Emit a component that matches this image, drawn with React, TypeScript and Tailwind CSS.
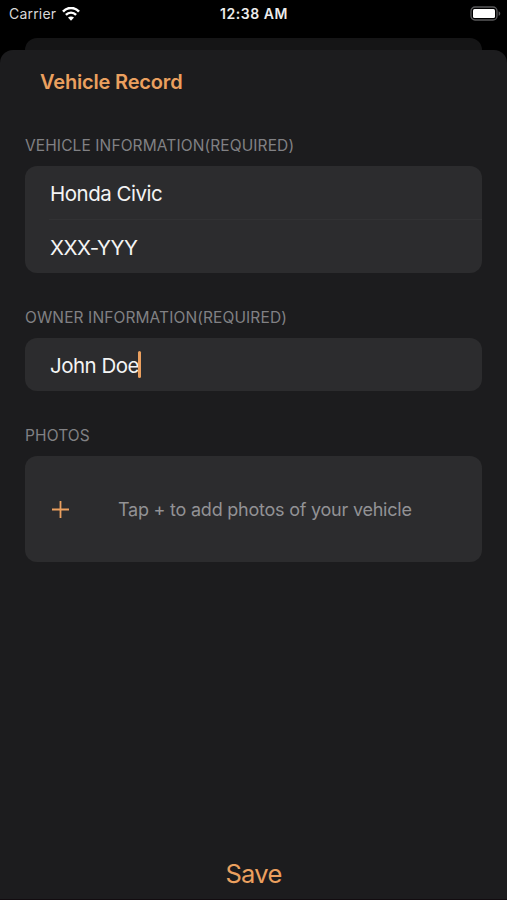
import type { ReactNode } from "react";

const Wifi = () => (
  <svg width="18" height="14" viewBox="0 0 18 14" fill="none" stroke="#fff">
    <path d="M1 4.7C5.4 -0.3 12.6 -0.3 17 4.7" strokeWidth="2.5" />
    <path d="M3.9 7.9C6.8 4.8 11.2 4.8 14.1 7.9" strokeWidth="2.4" />
    <path d="M9 13.7L6 10.6C7.7 9 10.3 9 12 10.6Z" fill="#fff" stroke="none" />
  </svg>
);

const Battery = () => (
  <svg width="31" height="15" viewBox="0 0 31 15" fill="none">
    <rect x="1" y="1" width="26" height="13" rx="4" stroke="#59595b" strokeWidth="1.3" />
    <rect x="3" y="3" width="22" height="9" rx="1.5" fill="#fff" />
    <path d="M28.6 5.2C30.8 6 30.8 9 28.6 9.8Z" fill="#59595b" />
  </svg>
);

const StatusBar = () => (
  <header className="relative h-[50px] shrink-0 bg-black pl-[9px] pr-[6px]">
    <div className="grid h-[27px] grid-cols-3 items-center">
      <div className="flex items-center gap-[6px]">
        <span className="text-[14px] tracking-[0.2px] text-[#d8d8d8]">Carrier</span>
        <Wifi />
      </div>
      <span className="-ml-[2px] whitespace-nowrap text-center text-[14px] font-semibold tracking-[0.55px] text-[#ececec]">
        12:38 AM
      </span>
      <div className="flex justify-end">
        <Battery />
      </div>
    </div>
    <div className="absolute inset-x-[25px] bottom-0 h-[12px] rounded-t-[12px] bg-[#151516]"></div>
  </header>
);

const Section = ({ title, children }: { title: string; children: ReactNode }) => (
  <section className="mb-[34px]">
    <h2 className="mb-[11px] h-[20px] text-[15.5px] leading-[22px] tracking-[0.11px] text-[#818184]">
      {title}
    </h2>
    <div className="overflow-hidden rounded-[12px] bg-[#2c2c2e]">{children}</div>
  </section>
);

const ROW =
  "flex h-[53px] items-center pl-[25px] pt-[3px] text-[20.5px] tracking-[-0.5px] text-[#f4f4f4]";

const App = () => {
  return (
    <div className="bg-black font-['Inter',sans-serif]">
      <div className="flex h-[900px] w-[507px] flex-col">
        <StatusBar />
        <main className="flex flex-1 flex-col rounded-t-[13px] border-b border-[#120c10] bg-[#1c1c1e] px-[25px]">
          <h1 className="mb-[38px] ml-[15px] mt-[18px] h-[29px] text-[20px] font-semibold leading-[29px] tracking-[-0.17px] text-[#eba05f]">
            Vehicle Record
          </h1>
          <Section title="VEHICLE INFORMATION(REQUIRED)">
            <div className={ROW}>Honda Civic</div>
            <div className="ml-[24px] h-px bg-[#323234]"></div>
            <div className={ROW}>XXX-YYY</div>
          </Section>
          <Section title="OWNER INFORMATION(REQUIRED)">
            <div className={ROW}>
              John Doe
              <span className="-ml-px -mt-[3px] h-[27px] w-[3px] rounded-full bg-[#eba05f]"></span>
            </div>
          </Section>
          <Section title="PHOTOS">
            <div className="flex h-[106px] items-center pl-[27px]">
              <button aria-label="Add photo">
                <svg width="17" height="17" viewBox="0 0 17 17" stroke="#eba05f" strokeWidth="1.8">
                  <path d="M8.5 0V17M0 8.5H17" />
                </svg>
              </button>
              <p className="ml-[49px] text-[18px] tracking-[-0.23px] text-[#929295]">
                Tap + to add photos of your vehicle
              </p>
            </div>
          </Section>
          <button className="mx-auto mb-[8px] mt-auto h-[34px] text-[25.5px] leading-[34px] tracking-[-0.7px] text-[#eba05f]">
            Save
          </button>
        </main>
      </div>
    </div>
  );
};

export default App;
